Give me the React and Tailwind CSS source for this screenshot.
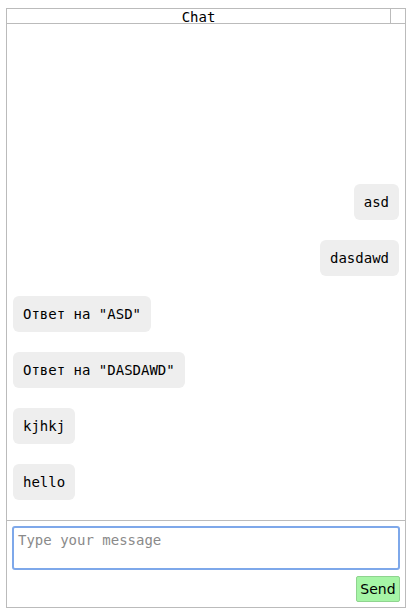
import React, { useState } from "react";

const messages = [
  { id: 1, text: "asd", mine: true },
  { id: 2, text: "dasdawd", mine: true },
  { id: 3, text: 'Ответ на "ASD"', mine: false },
  { id: 4, text: 'Ответ на "DASDAWD"', mine: false },
  { id: 5, text: "kjhkj", mine: false },
  { id: 6, text: "hello", mine: false },
];

const mono = "font-['DejaVu_Sans_Mono',monospace]";

const App = () => {
  const [value, setValue] = useState("");

  return (
    <div className="pt-[8px] pl-[6px] bg-white">
      <div className="w-[400px] h-[600px] border border-[#bbbbbb] flex flex-col">
        {/* Header */}
        <div className="flex h-[15px] border-b border-[#bbbbbb]">
          <div className={`flex-1 text-center text-[14px] leading-[16px] text-black ${mono}`}>Chat</div>
          <div className="w-[15px] border-l border-[#bbbbbb]"></div>
        </div>

        {/* Messages */}
        <div className="flex-1 flex flex-col justify-end pl-[6px] pr-[6px] overflow-hidden">
          {messages.map((m) => (
            <div key={m.id} className={`flex mb-[20px] ${m.mine ? "justify-end" : "justify-start"}`}>
              <div className={`bg-[#eeeeee] rounded-[6px] px-[10px] py-[10px] text-[14px] leading-[16px] text-black whitespace-pre ${mono}`}>
                {m.text}
              </div>
            </div>
          ))}
        </div>

        {/* Input */}
        <div className="border-t border-[#bbbbbb] p-[5px] flex flex-col">
          <textarea
            value={value}
            onChange={(e) => setValue(e.target.value)}
            placeholder="Type your message"
            className={`h-[44px] w-full resize-none border-2 border-[#7ea8ea] rounded-[3px] px-[4px] pt-[4px] pb-[2px] text-[14px] leading-[17px] outline-none placeholder:text-[#8a8a8a] ${mono}`}
          />
          <div className="flex justify-end mt-[6px]">
            <button className="h-[26px] w-[44px] bg-[#a6f5a6] border border-[#8fd48f] rounded-[2px] text-[14px] text-black font-['DejaVu_Sans',sans-serif] leading-[16px]">
              Send
            </button>
          </div>
        </div>
      </div>
    </div>
  );
};

export default App;
